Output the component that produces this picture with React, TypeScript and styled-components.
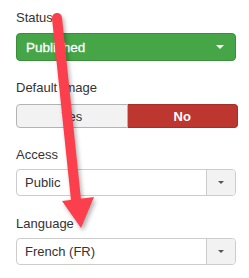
import React from "react";
import styled, { createGlobalStyle } from "styled-components";

const Global = createGlobalStyle`
  html, body { margin: 0; padding: 0; background: #fff; }
  body { font-family: "Liberation Sans", Arial, sans-serif; }
`;

const Page = styled.div`
  position: relative;
  width: 249px;
  height: 278px;
  padding: 9px 0 0 16px;
  box-sizing: border-box;
  overflow: hidden;
`;

const Group = styled.div<{ $gap: number }>`
  margin-bottom: ${(p) => p.$gap}px;
`;

const Label = styled.div<{ $space: number }>`
  font-size: 13px;
  line-height: 18px;
  color: #333;
  margin-bottom: ${(p) => p.$space}px;
`;

const GreenSelect = styled.div`
  width: 220px;
  height: 28px;
  box-sizing: border-box;
  background: #46a546;
  border: 1px solid #3b8f3b;
  border-radius: 4px;
  display: flex;
  align-items: center;
  justify-content: space-between;
  padding: 0 11px 0 9px;
  color: #fff;
  font-size: 13.5px;
  -webkit-text-stroke: 0.3px #fff;
`;

const Caret = styled.span<{ $color: string; $w: number }>`
  width: 0;
  height: 0;
  border-left: ${(p) => p.$w / 2}px solid transparent;
  border-right: ${(p) => p.$w / 2}px solid transparent;
  border-top: ${(p) => p.$w / 2}px solid ${(p) => p.$color};
`;

const Toggle = styled.div`
  width: 222px;
  height: 24px;
  display: flex;
  font-size: 13px;
`;

const ToggleBtn = styled.div<{ $active?: boolean }>`
  flex: 1;
  box-sizing: border-box;
  display: flex;
  align-items: center;
  justify-content: center;
  background: ${(p) => (p.$active ? "#bd362f" : "#f2f2f2")};
  border: 1px solid ${(p) => (p.$active ? "#a52f29" : "#b3b3b3")};
  color: ${(p) => (p.$active ? "#fff" : "#333")};
  font-weight: ${(p) => (p.$active ? "bold" : "normal")};
  border-radius: ${(p) => (p.$active ? "0 4px 4px 0" : "4px 0 0 4px")};
  ${(p) => (p.$active ? "border-left: none;" : "")}
`;

const Select = styled.div`
  width: 220px;
  height: 27px;
  box-sizing: border-box;
  border: 1px solid #ccc;
  border-radius: 4px;
  display: flex;
  overflow: hidden;
  background: #fff;
`;

const SelectText = styled.div`
  flex: 1;
  display: flex;
  align-items: center;
  padding-left: 8px;
  font-size: 13px;
  color: #333;
`;

const SelectArrow = styled.div`
  width: 28px;
  border-left: 1px solid #ccc;
  background: #f2f2f2;
  display: flex;
  align-items: center;
  justify-content: center;
`;

const Overlay = styled.svg`
  position: absolute;
  left: 0;
  top: 0;
  pointer-events: none;
  filter: drop-shadow(2px 3px 2px rgba(0, 0, 0, 0.3));
`;

export default function App() {
  return (
    <Page>
      <Global />
      <Group $gap={18}>
        <Label $space={6}>Status</Label>
        <GreenSelect>
          <span>Published</span>
          <Caret $color="#fff" $w={8} />
        </GreenSelect>
      </Group>
      <Group $gap={18}>
        <Label $space={7}>Default Image</Label>
        <Toggle>
          <ToggleBtn>Yes</ToggleBtn>
          <ToggleBtn $active>No</ToggleBtn>
        </Toggle>
      </Group>
      <Group $gap={19}>
        <Label $space={5}>Access</Label>
        <Select>
          <SelectText>Public</SelectText>
          <SelectArrow>
            <Caret $color="#555" $w={7} />
          </SelectArrow>
        </Select>
      </Group>
      <Group $gap={0}>
        <Label $space={5}>Language</Label>
        <Select>
          <SelectText>French (FR)</SelectText>
          <SelectArrow>
            <Caret $color="#555" $w={7} />
          </SelectArrow>
        </Select>
      </Group>
      <Overlay width="249" height="278" viewBox="0 0 249 278">
        <line x1="57" y1="18" x2="76" y2="200" stroke="#fb3f4c" strokeWidth="10" strokeLinecap="round" />
        <polygon points="62,201 94,197 81,228" fill="#fb3f4c" />
      </Overlay>
    </Page>
  );
}
